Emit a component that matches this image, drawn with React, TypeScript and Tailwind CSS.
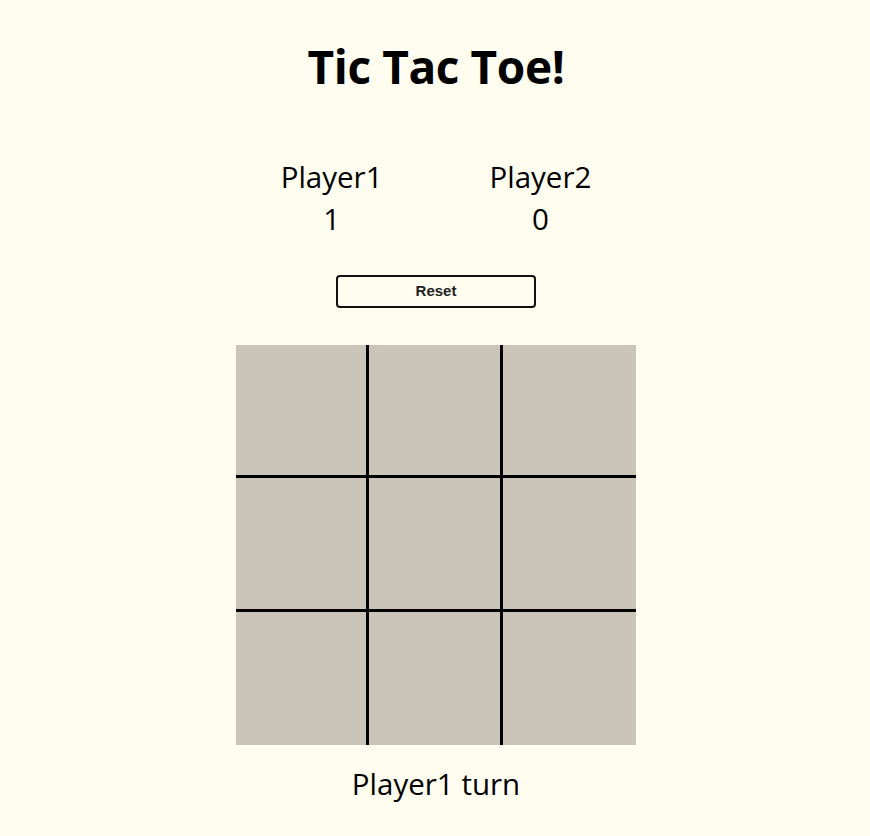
const cells = [0, 1, 2, 3, 4, 5, 6, 7, 8];

export default function App() {
  return (
    <div className="min-h-[836px] bg-[#fffdf0] pl-[2px] font-['Open_Sans',sans-serif] text-black flex flex-col items-center">
      <h1 className="mt-[34px] text-[46px] leading-[64px] font-bold tracking-[-0.4px]">Tic Tac Toe!</h1>

      {/* scores */}
      <div className="mt-[58px] flex gap-[107px] text-[29.5px] leading-[42px]">
        <div className="flex flex-col items-center">
          <span>Player1</span>
          <span>1</span>
        </div>
        <div className="flex flex-col items-center">
          <span>Player2</span>
          <span>0</span>
        </div>
      </div>

      <button className="mt-[35px] w-[200px] h-[33px] rounded-[4px] border-2 border-[#111] bg-transparent font-['Liberation_Sans',sans-serif] text-[15px] font-bold text-[#222]">
        Reset
      </button>

      {/* board */}
      <div className="mt-[37px] grid grid-cols-3 grid-rows-3 w-[400px] h-[400px] bg-[#cbc5b9]">
        {cells.map((i) => (
          <div
            key={i}
            className={`border-black ${i % 3 !== 2 ? "border-r-[3px]" : ""} ${i < 6 ? "border-b-[3px]" : ""}`}
          />
        ))}
      </div>

      <p className="mt-[19px] text-[29.5px] leading-[40px]">Player1 turn</p>
    </div>
  );
}
